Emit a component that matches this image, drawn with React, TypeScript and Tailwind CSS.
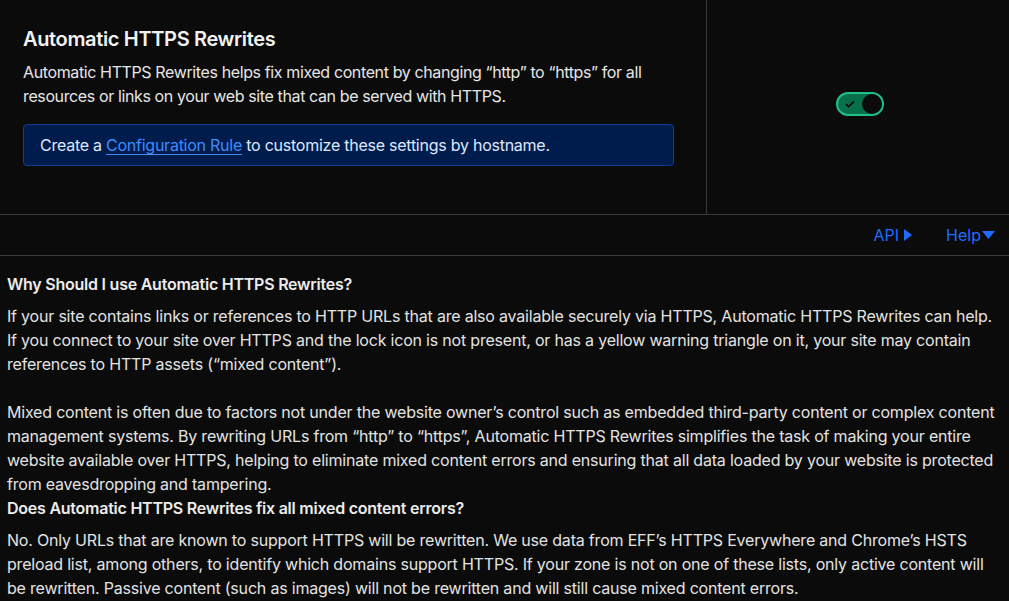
export default function App() {
  return (
    <div
      className="min-h-[601px] w-full bg-[#0b0b0b] tracking-[-0.38px] text-[#e3e3e3]"
      style={{ fontFamily: "Inter, 'Noto Sans', sans-serif" }}
    >
      <div className="flex border-b border-[#3a3a3a]">
        <div className="w-[707px] border-r border-[#3a3a3a] px-[23px] pb-[48px] pt-[25px]">
          <h2 className="text-[20px] font-semibold leading-[28px] tracking-[-0.35px] text-[#f2f2f2]">
            Automatic HTTPS Rewrites
          </h2>
          <p className="mt-[7px] text-[16px] leading-[24px] text-[#e6e6e6]">
            Automatic HTTPS Rewrites helps fix mixed content by changing “http” to “https” for all
            resources or links on your web site that can be served with HTTPS.
          </p>
          <div className="mt-[16px] w-[651px] rounded-[4px] border border-[#0d3f8f] bg-[#001c4c] px-[16px] py-[8px] text-[16px] leading-[24px] tracking-[-0.25px] text-[#dfe8ff]">
            Create a{" "}
            <a href="#" className="text-[#3f8cff] underline decoration-[#3f8cff] underline-offset-[3px]">
              Configuration Rule
            </a>{" "}
            to customize these settings by hostname.
          </div>
        </div>
        <div className="flex flex-1 items-center justify-center pb-[6px] pl-[4px]">
          <button
            aria-label="toggle"
            className="flex h-[24px] w-[48px] items-center justify-between rounded-full border-2 border-[#1fbf86] bg-[#07704a] pl-[6px] pr-0"
          >
            <svg width="12" height="12" viewBox="0 0 12 12" fill="none">
              <path d="M2 6.2 4.6 8.6 10 3.4" stroke="#0b0b0b" strokeWidth="1.6" />
            </svg>
            <span className="h-[20px] w-[20px] rounded-full bg-[#0b0b0b]" />
          </button>
        </div>
      </div>

      <div className="flex h-[41px] items-center justify-end gap-[34px] border-b border-[#3a3a3a] pr-[14px] text-[16px] tracking-normal text-[#1f6bff]">
        <a href="#" className="flex items-center gap-[5px]">
          API
          <svg width="8" height="12" viewBox="0 0 8 12">
            <path d="M0 0 8 6 0 12Z" fill="#1f6bff" />
          </svg>
        </a>
        <a href="#" className="flex items-center gap-[1px]">
          Help
          <svg width="13" height="8" viewBox="0 0 13 8">
            <path d="M0 0H13L6.5 8Z" fill="#1f6bff" />
          </svg>
        </a>
      </div>

      <div className="px-[7px] pt-[16px] text-[16px] leading-[24px] tracking-[-0.2px] text-[#e3e3e3]">
        <h3 className="mb-[8px] text-[16px] font-semibold tracking-[-0.24px] text-[#ececec]">
          Why Should I use Automatic HTTPS Rewrites?
        </h3>
        <p>
          If your site contains links or references to HTTP URLs that are also available securely via
          HTTPS, Automatic HTTPS Rewrites can help. If you connect to your site over HTTPS and the lock
          icon is not present, or has a yellow warning triangle on it, your site may contain references
          to HTTP assets (“mixed content”).
        </p>
        <br />
        <p>
          Mixed content is often due to factors not under the website owner’s control such as embedded
          third-party content or complex content management systems. By rewriting URLs from “http” to
          “https”, Automatic HTTPS Rewrites simplifies the task of making your entire website available
          over HTTPS, helping to eliminate mixed content errors and ensuring that all data loaded by
          your website is protected from eavesdropping and tampering.
        </p>
        <h3 className="mb-[8px] text-[16px] font-semibold tracking-[-0.24px] text-[#ececec]">
          Does Automatic HTTPS Rewrites fix all mixed content errors?
        </h3>
        <p>
          No. Only URLs that are known to support HTTPS will be rewritten. We use data from EFF’s HTTPS
          Everywhere and Chrome’s HSTS preload list, among others, to identify which domains support
          HTTPS. If your zone is not on one of these lists, only active content will be rewritten.
          Passive content (such as images) will not be rewritten and will still cause mixed content
          errors.
        </p>
      </div>
    </div>
  );
}
